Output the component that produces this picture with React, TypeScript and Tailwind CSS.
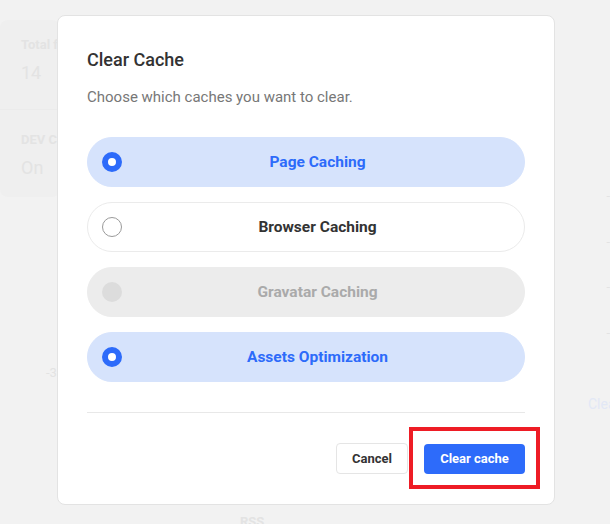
import { useState } from 'react';

type CacheOption = {
  id: string;
  label: string;
  disabled?: boolean;
};

const options: CacheOption[] = [
  { id: 'page', label: 'Page Caching' },
  { id: 'browser', label: 'Browser Caching' },
  { id: 'gravatar', label: 'Gravatar Caching', disabled: true },
  { id: 'assets', label: 'Assets Optimization' },
];

function Backdrop() {
  return (
    <div className="absolute inset-0 text-[#e3e3e3]">
      <div className="mt-[20px] w-[60px] rounded-lg bg-[#efefef] pl-[21px] pt-[15px] pb-[17px]">
        <p className="whitespace-nowrap text-[13px] font-bold leading-5">Total files</p>
        <p className="mt-[6px] text-[18px] leading-6">14</p>
        <div className="-ml-[21px] mt-[24px] h-px bg-[#ebebeb]" />
        <p className="mt-[20px] whitespace-nowrap text-[13px] font-bold leading-5">DEV CDN</p>
        <p className="mt-[6px] text-[18px] leading-6">On</p>
      </div>
      <p className="ml-[46px] mt-[166px] text-[13px]">-3</p>
      <div className="absolute right-0 top-[186px] flex flex-col gap-[26px] text-[13px]">
        <span>-</span>
        <span>-</span>
        <span>-</span>
        <span>-</span>
      </div>
      <p className="absolute left-[588px] top-[394px] text-[14px] text-[#e2e8f6]">Clear</p>
      <p className="absolute left-[240px] top-[512px] text-[13px] font-bold">RSS</p>
    </div>
  );
}

function Radio({ checked, disabled }: { checked: boolean; disabled?: boolean }) {
  if (disabled) {
    return <span className="h-5 w-5 shrink-0 rounded-full bg-[#dcdcdc]" />;
  }
  if (checked) {
    return <span className="h-5 w-5 shrink-0 rounded-full border-[6px] border-[#2d6bfa] bg-white" />;
  }
  return <span className="h-5 w-5 shrink-0 rounded-full border border-[#9a9a9a] bg-white" />;
}

export default function App() {
  const [selected, setSelected] = useState<Record<string, boolean>>({
    page: true,
    browser: false,
    gravatar: false,
    assets: true,
  });

  const toggle = (opt: CacheOption) => {
    if (opt.disabled) return;
    setSelected((s) => ({ ...s, [opt.id]: !s[opt.id] }));
  };

  return (
    <div
      className="relative h-[524px] w-full overflow-hidden bg-[#f2f2f2]"
      style={{ fontFamily: 'Roboto, "Liberation Sans", sans-serif' }}
    >
      <Backdrop />

      <div className="absolute left-[57px] top-[15px] w-[498px] rounded-lg border border-[#e3e3e3] bg-white px-[29px] pt-[32px] pb-[30px]">
        <h2 className="text-[18px] font-medium leading-6 text-[#333]">Clear Cache</h2>
        <p className="mt-[15px] text-[15px] leading-5 text-[#777]">
          Choose which caches you want to clear.
        </p>

        <div className="mt-[30px] flex flex-col gap-[15px]">
          {options.map((opt) => {
            const checked = !opt.disabled && selected[opt.id];
            const tone = opt.disabled
              ? 'bg-[#ececec] text-[#aaa] border-[#ececec]'
              : checked
                ? 'bg-[#d6e3fc] text-[#2d6bfa] border-[#d6e3fc]'
                : 'bg-white text-[#333] border-[#ebebeb]';
            return (
              <button
                key={opt.id}
                type="button"
                onClick={() => toggle(opt)}
                className={`flex h-[50px] items-center rounded-full border px-[14px] ${tone}`}
              >
                <Radio checked={checked} disabled={opt.disabled} />
                <span className="flex-1 pl-[3px] pt-[2px] text-center text-[15.5px] font-bold">{opt.label}</span>
              </button>
            );
          })}
        </div>

        <div className="mt-[30px] h-px bg-[#e8e8e8]" />

        <div className="mt-[30px] flex items-center justify-end gap-[16px]">
          <button
            type="button"
            className="h-[31px] rounded-[4px] border border-[#e5e5e5] bg-white px-[15px] text-[13px] font-bold text-[#333]"
          >
            Cancel
          </button>
          <div className="relative">
            <button
              type="button"
              className="h-[30px] w-[101px] rounded-[4px] bg-[#2d6bfa] text-[13px] font-bold text-white"
            >
              Clear cache
            </button>
            <span className="pointer-events-none absolute -bottom-[15px] -left-[15px] -right-[15px] -top-[17px] border-4 border-[#ee1c25]" />
          </div>
        </div>
      </div>
    </div>
  );
}
